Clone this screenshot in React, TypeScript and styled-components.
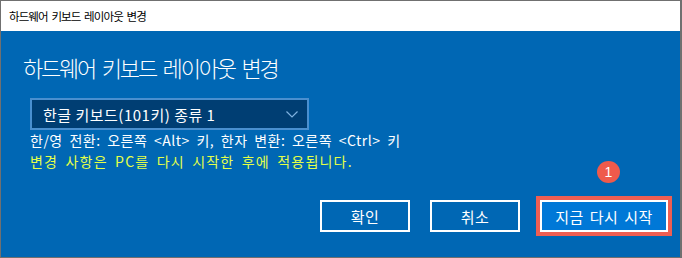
import React from 'react';
import styled, { createGlobalStyle } from 'styled-components';

const GlobalStyle = createGlobalStyle`
  html, body {
    margin: 0;
    padding: 0;
    background: #ffffff;
  }
  * {
    box-sizing: border-box;
  }
`;

const FONT = `"Noto Sans CJK KR", "Noto Sans", sans-serif`;

const Window = styled.div`
  width: 682px;
  height: 258px;
  display: flex;
  flex-direction: column;
  border: 1px solid #707070;
  border-right-width: 2px;
  font-family: ${FONT};
  overflow: hidden;
`;

const TitleBar = styled.div`
  height: 30px;
  flex: none;
  display: flex;
  align-items: center;
  padding-left: 8px;
  background: #ffffff;
  color: #000000;
  font-size: 11.5px;
  letter-spacing: -0.9px;
  word-spacing: 2px;
`;

const Body = styled.div`
  flex: 1;
  display: flex;
  flex-direction: column;
  background: #0067b4;
  padding: 18px 0 0 29px;
  color: #ffffff;
`;

const Heading = styled.h1`
  margin: 0 0 0 -7px;
  font-size: 22px;
  font-weight: 300;
  line-height: 36px;
  letter-spacing: -2.2px;
  word-spacing: 4px;
`;

const Select = styled.div`
  margin-top: 13px;
  width: 279px;
  height: 32px;
  display: flex;
  align-items: center;
  justify-content: space-between;
  padding: 0 9px 0 11px;
  background: #003e73;
  border: 2px solid #4a8fcf;
  font-size: 15px;
  letter-spacing: 0.5px;
`;

const Chevron = styled.svg`
  width: 12px;
  height: 7px;
  flex: none;
`;

const Info = styled.div`
  display: flex;
  flex-direction: column;
`;

const InfoLine = styled.div<{ $warn?: boolean }>`
  font-size: 14px;
  line-height: 21px;
  letter-spacing: ${(p) => (p.$warn ? '1.2px' : '0.5px')};
  word-spacing: 3px;
  color: ${(p) => (p.$warn ? '#e4ff48' : '#ffffff')};
`;

const ButtonRow = styled.div`
  margin-top: 28px;
  display: flex;
  justify-content: flex-end;
  align-items: center;
  gap: 20px;
  padding-right: 12px;
`;

const Button = styled.button<{ $primary?: boolean }>`
  width: ${(p) => (p.$primary ? '128px' : '90px')};
  height: 32px;
  padding: 0;
  border: 2px solid #ffffff;
  background: ${(p) => (p.$primary ? '#0078d7' : 'transparent')};
  color: #ffffff;
  font-family: ${FONT};
  font-size: 15px;
  letter-spacing: 0.5px;
  word-spacing: 2px;
  cursor: pointer;
`;

const Highlight = styled.div`
  position: relative;
  margin: -4px;
  border: 4px solid #ef5e52;
  display: flex;
`;

const Badge = styled.span`
  position: absolute;
  left: 57px;
  top: -39px;
  width: 23px;
  height: 22px;
  border-radius: 50%;
  background: #ef5a4b;
  color: #ffffff;
  font-family: "Liberation Sans", sans-serif;
  font-size: 14px;
  display: flex;
  align-items: center;
  justify-content: center;
`;

export default function App() {
  return (
    <>
      <GlobalStyle />
      <Window>
        <TitleBar>하드웨어 키보드 레이아웃 변경</TitleBar>
        <Body>
          <Heading>하드웨어 키보드 레이아웃 변경</Heading>
          <Select>
            <span>한글 키보드(101키) 종류 1</span>
            <Chevron viewBox="0 0 12 7">
              <path d="M0.5 0.5 L6 6 L11.5 0.5" fill="none" stroke="#7fb2e0" strokeWidth="1.2" />
            </Chevron>
          </Select>
          <Info>
            <InfoLine>한/영 전환: 오른쪽 &lt;Alt&gt; 키, 한자 변환: 오른쪽 &lt;Ctrl&gt; 키</InfoLine>
            <InfoLine $warn>변경 사항은 PC를 다시 시작한 후에 적용됩니다.</InfoLine>
          </Info>
          <ButtonRow>
            <Button>확인</Button>
            <Button>취소</Button>
            <Highlight>
              <Badge>1</Badge>
              <Button $primary>지금 다시 시작</Button>
            </Highlight>
          </ButtonRow>
        </Body>
      </Window>
    </>
  );
}
